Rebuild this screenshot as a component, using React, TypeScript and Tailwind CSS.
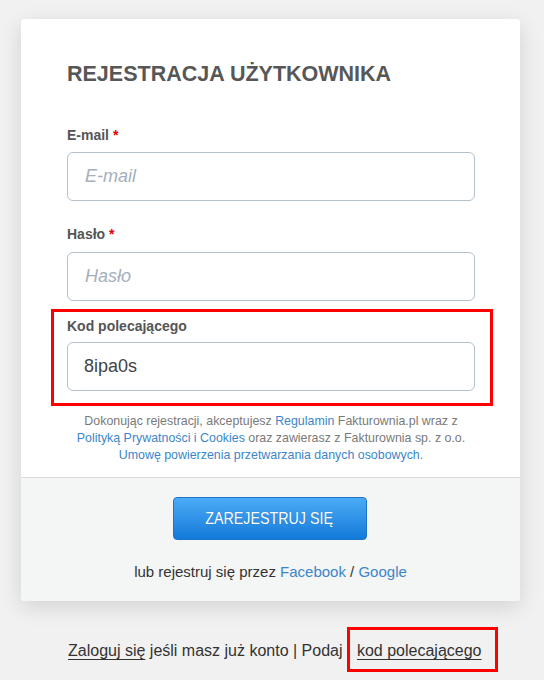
export default function App() {
  return (
    <div
      className="min-h-[680px] w-[544px] bg-[#f1f1f1] pt-[19px]"
      style={{ fontFamily: '"Liberation Sans", Arial, sans-serif' }}
    >
      <div className="ml-[21px] w-[499px] overflow-hidden rounded-[3px] bg-white shadow-[0_6px_22px_rgba(0,0,0,0.13)]">
        <div className="px-[45px] pl-[46px] pt-[42px]">
          <h1 className="text-[21.5px] font-bold leading-[26px] text-[#575757]">REJESTRACJA UŻYTKOWNIKA</h1>

          <div className="mt-[38px]">
            <label className="block text-[14px] font-bold leading-[20px] text-[#555]">
              E-mail <span className="text-[#e60000]">*</span>
            </label>
            <input
              placeholder="E-mail"
              className="mt-[7px] h-[49px] w-[408px] rounded-[6px] border border-[#b4c0cb] bg-white pl-[17px] text-[18px] text-[#444] outline-none placeholder:italic placeholder:text-[#a4b0bb]"
            />
          </div>

          <div className="mt-[23px]">
            <label className="block text-[14px] font-bold leading-[20px] text-[#555]">
              Hasło <span className="text-[#e60000]">*</span>
            </label>
            <input
              placeholder="Hasło"
              type="text"
              className="mt-[8px] h-[49px] w-[408px] rounded-[6px] border border-[#b4c0cb] bg-white pl-[17px] text-[18px] text-[#444] outline-none placeholder:italic placeholder:text-[#a4b0bb]"
            />
          </div>

          <div className="-ml-[16px] -mr-[18px] mt-[8px] border-[3px] border-[#ff0000] pb-[12px] pl-[13px] pr-[15px] pt-[4px]">
            <label className="block text-[14px] font-bold leading-[20px] text-[#555]">Kod polecającego</label>
            <input
              defaultValue="8ipa0s"
              className="mt-[6px] h-[49px] w-[408px] rounded-[6px] border border-[#b4c0cb] bg-white pl-[16px] text-[18px] text-[#444] outline-none"
            />
          </div>

          <p className="mt-[7px] whitespace-nowrap pb-[13px] text-center text-[12.4px] leading-[17px] text-[#7a7a7a]">
            Dokonując rejestracji, akceptujesz <a className="text-[#3b86c8]">Regulamin</a> Fakturownia.pl wraz z
            <br />
            <a className="text-[#3b86c8]">Polityką Prywatności i Cookies</a> oraz zawierasz z Fakturownia sp. z o.o.
            <br />
            <a className="text-[#3b86c8]">Umowę powierzenia przetwarzania danych osobowych</a>.
          </p>
        </div>

        <div className="flex flex-col items-center border-t border-[#dcdcdc] bg-[#f4f5f5] pb-[19px] pt-[19px]">
          <button className="ml-[-2px] flex h-[43px] w-[194px] items-center justify-center rounded-[4px] border border-[#1b74c8] bg-gradient-to-b from-[#4aabf7] to-[#117ad9] text-white">
            <span className="inline-block scale-x-[0.84] whitespace-nowrap text-[17px] leading-none [text-shadow:0_0_1px_rgba(0,0,0,0.25)]">
              ZAREJESTRUJ SIĘ
            </span>
          </button>
          <p className="mt-[22px] text-[15px] leading-[20px] text-[#333]">
            lub rejestruj się przez <a className="text-[#3b86c8]">Facebook</a> / <a className="text-[#3b86c8]">Google</a>
          </p>
        </div>
      </div>

      <div className="mt-[26px] whitespace-nowrap pl-[68px] text-[16px] leading-[18px] text-[#333]">
        <a className="underline decoration-[#333] underline-offset-[3px]">Zaloguj się</a> jeśli masz już konto | Podaj{' '}
        <span className="inline-block border-[3px] border-[#ff0000] pb-[9px] pl-[7px] pr-[13px] pt-[12px]">
          <a className="underline decoration-[#333] underline-offset-[3px]">kod polecającego</a>
        </span>
      </div>
    </div>
  )
}
